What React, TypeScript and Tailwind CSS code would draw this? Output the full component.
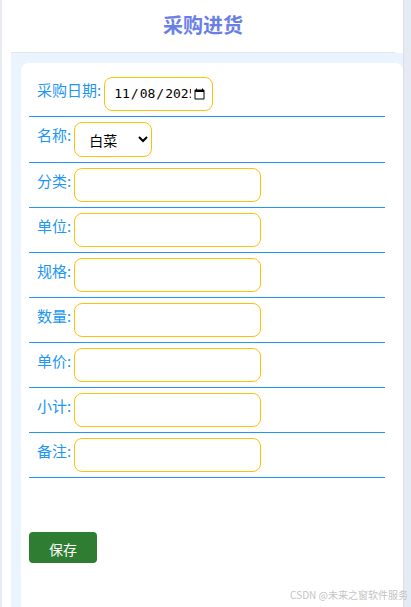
import React from 'react';

/**
 * 采购进货 form
 * Mobile purchase entry page with a single card of labelled inputs
 */

const TEXT_FIELDS = ['分类', '单位', '规格', '数量', '单价', '小计', '备注'] as const;

const CJK = "font-['Noto_Sans_CJK_SC','Noto_Sans',sans-serif]";

function Row({ label, children }: { label: string; children: React.ReactNode }): React.JSX.Element {
  return (
    <div className="flex items-start gap-[3px] border-b border-[#2196f3] py-[5px] pl-2">
      <label className="mt-[2px] text-[15px] leading-[22px] text-[#2196f3]">{label}:</label>
      {children}
    </div>
  );
}

export default function App(): React.JSX.Element {
  return (
    <div className={`relative flex h-[607px] w-[411px] overflow-hidden bg-white ${CJK}`}>
      <div className="w-[2px] shrink-0 bg-[#e8ebf0]" />

      <main className="flex min-w-0 flex-1 flex-col">
        {/* Header */}
        <header className="ml-[9px] mr-[8px] flex h-[53px] shrink-0 items-center justify-center border-b border-[#e2e5ea] pb-[2px]">
          <h1 className="text-[20px] font-bold text-[#6a7fe6]">采购进货</h1>
        </header>

        {/* Body */}
        <div className="ml-[9px] flex flex-1 flex-col bg-[#eaf4fe] pl-[10px] pt-[10px]">
          <div className="flex flex-1 flex-col rounded-t-lg bg-white pl-2 pr-[18px] pt-[9px]">
            <Row label="采购日期">
              <input
                type="date"
                defaultValue="2025-11-08"
                className="h-[34px] w-[109px] rounded-lg border border-[#ffc107] pl-2 pr-1 font-['DejaVu_Sans_Mono',monospace] text-[13px] text-black"
              />
            </Row>
            <Row label="名称">
              <select
                defaultValue="白菜"
                className="h-[35px] w-[78px] rounded-lg border border-[#ffc107] pl-[10px] pr-1 text-[14px] text-black"
              >
                <option>白菜</option>
                <option>萝卜</option>
                <option>土豆</option>
              </select>
            </Row>
            {TEXT_FIELDS.map((field) => (
              <Row key={field} label={field}>
                <input type="text" className="h-[34px] w-[187px] rounded-lg border border-[#ffc107] px-2 text-[14px]" />
              </Row>
            ))}

            <div className="mt-[54px]">
              <button className="h-[31px] w-[68px] rounded bg-[#2e7d32] pt-[3px] text-[14px] text-white">保存</button>
            </div>
          </div>
        </div>
      </main>

      <div className="w-[8px] shrink-0 border-l border-[#d9dee7] bg-[#e6ebf3]" />

      {/* CSDN watermark */}
      <span className="pointer-events-none absolute bottom-[5px] right-[3px] text-[10px] text-[#c4c4c4]">
        CSDN @未来之窗软件服务
      </span>
    </div>
  );
}
